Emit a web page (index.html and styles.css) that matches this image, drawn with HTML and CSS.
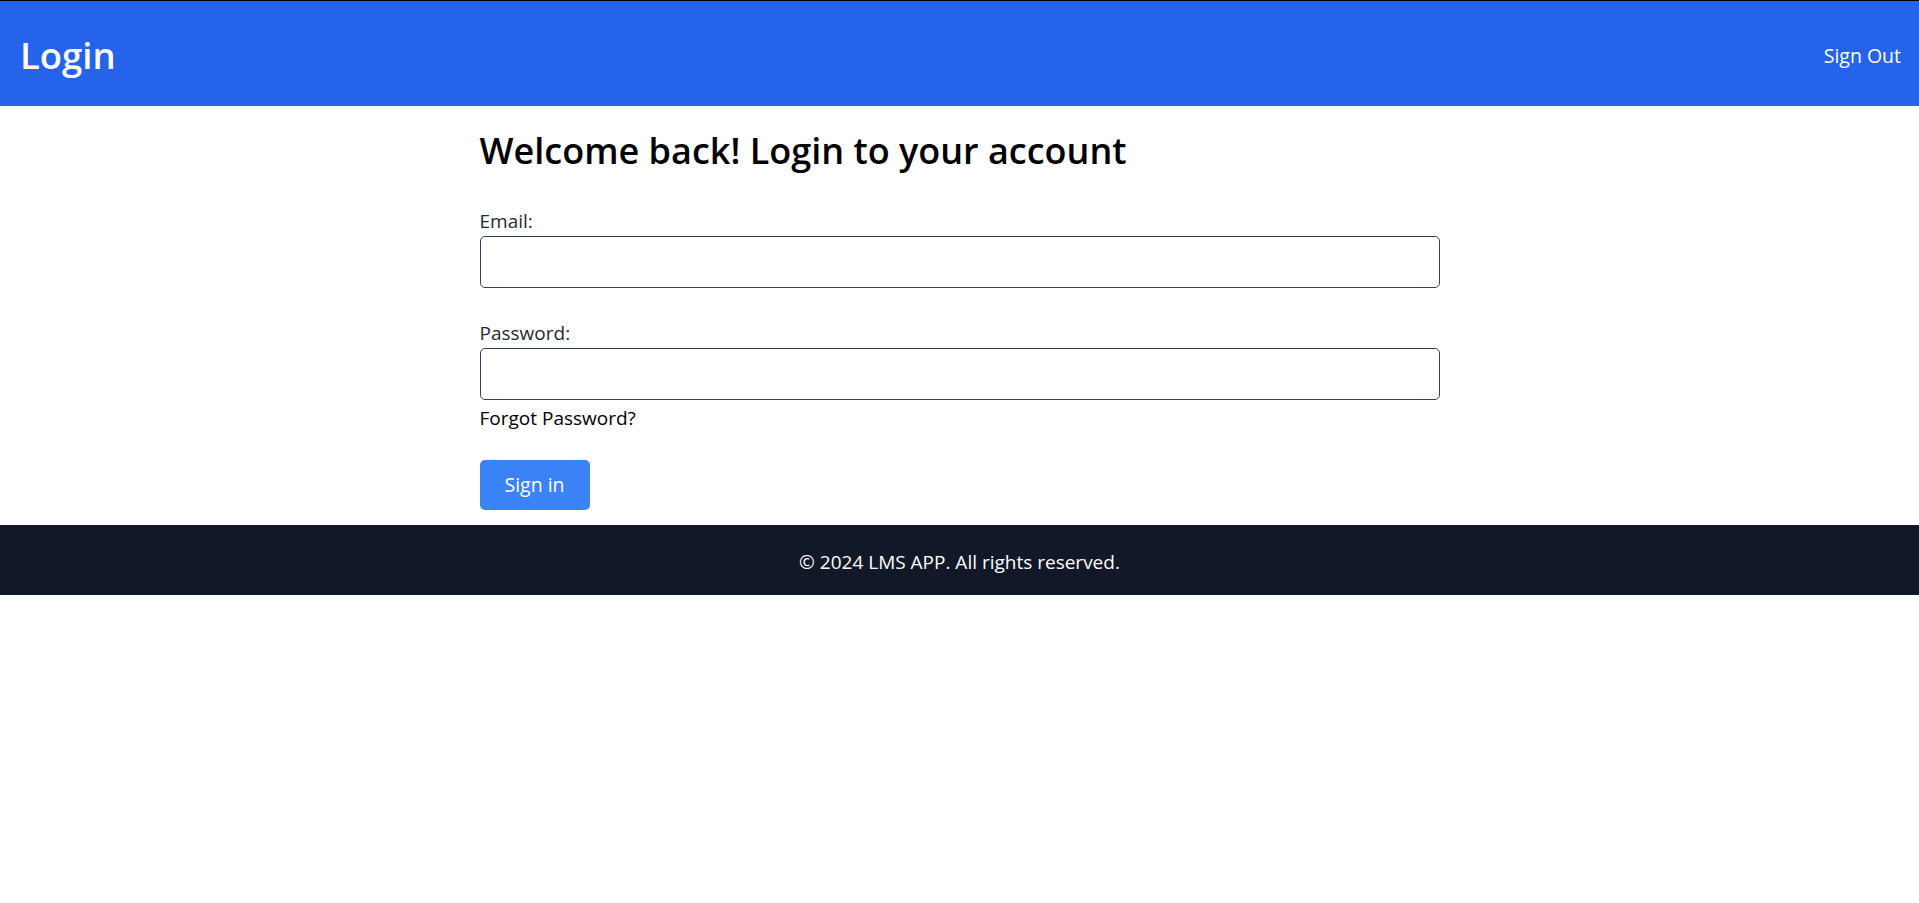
FILE: index.html
```html
<!DOCTYPE html>
<html lang="en">
<head>
<meta charset="utf-8">
<title>Login</title>
<link rel="stylesheet" href="styles.css">
</head>
<body>
<header class="topbar">
  <h1 class="brand">Login</h1>
  <a class="signout" href="#">Sign Out</a>
</header>
<main class="content">
  <h2 class="title">Welcome back! Login to your account</h2>
  <form class="form">
    <div class="field">
      <label class="label" for="email">Email:</label>
      <input class="input" id="email" type="email">
    </div>
    <div class="field">
      <label class="label" for="password">Password:</label>
      <input class="input" id="password" type="password">
      <a class="forgot" href="#">Forgot Password?</a>
    </div>
    <button class="btn" type="button">Sign in</button>
  </form>
</main>
<footer class="footer">
  <p class="footer-text">© 2024 LMS APP. All rights reserved.</p>
</footer>
</body>
</html>
```

FILE: styles.css
```css
* { box-sizing: border-box; }
html, body { margin: 0; padding: 0; background: #ffffff; }
body {
  font-family: "Open Sans", "Noto Sans", sans-serif;
  font-size: 19px;
  line-height: 30px;
  color: #000;
  border-top: 1px solid #000;
}
.topbar {
  background: #2563eb;
  height: 105px;
  display: flex;
  align-items: center;
  justify-content: space-between;
  padding: 4px 18px 0 20px;
  color: #fff;
}
.brand {
  margin: 0;
  font-size: 36.5px;
  line-height: 45px;
  font-weight: 600;
}
.signout {
  color: #fff;
  text-decoration: none;
  font-size: 19.5px;
  line-height: 30px;
}
.content {
  width: 960px;
  margin: 0 auto;
  padding: 22px 0 15px;
}
.title {
  margin: 0 0 33px;
  font-size: 36px;
  line-height: 45px;
  font-weight: 600;
}
.form { margin: 0; }
.field { margin-bottom: 30px; }
.label {
  display: block;
  color: #1f2937;
}
.input {
  display: block;
  width: 100%;
  height: 52px;
  border: 1px solid #374151;
  border-radius: 5px;
  padding: 0 10px;
  font: inherit;
  background: #fff;
}
.forgot {
  display: block;
  padding-top: 3px;
  margin-bottom: -3px;
  color: #000;
  text-decoration: none;
}
.btn {
  display: block;
  height: 50px;
  padding: 0 20px;
  border: 0;
  border-radius: 5px;
  background: #3b82f6;
  color: #fff;
  font: inherit;
  font-size: 19.5px;
  width: 110px;
}
.footer {
  background: #111827;
  color: #fff;
  height: 70px;
  display: flex;
  align-items: center;
  justify-content: center;
  padding-top: 3px;
}
.footer-text { margin: 0; }
```
